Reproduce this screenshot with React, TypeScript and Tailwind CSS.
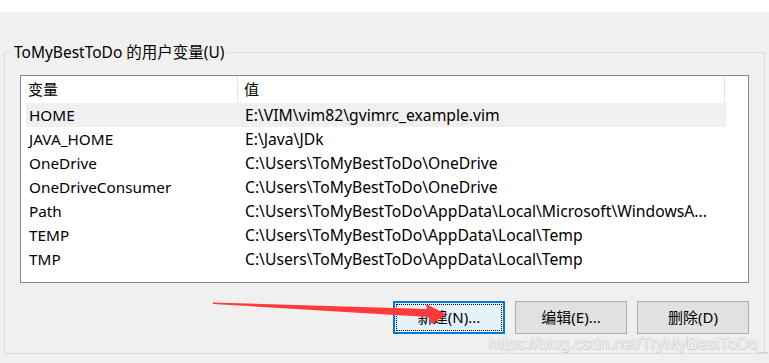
import React from "react";

const rows: [string, string][] = [
  ["HOME", "E:\\VIM\\vim82\\gvimrc_example.vim"],
  ["JAVA_HOME", "E:\\Java\\JDk"],
  ["OneDrive", "C:\\Users\\ToMyBestToDo\\OneDrive"],
  ["OneDriveConsumer", "C:\\Users\\ToMyBestToDo\\OneDrive"],
  ["Path", "C:\\Users\\ToMyBestToDo\\AppData\\Local\\Microsoft\\WindowsA..."],
  ["TEMP", "C:\\Users\\ToMyBestToDo\\AppData\\Local\\Temp"],
  ["TMP", "C:\\Users\\ToMyBestToDo\\AppData\\Local\\Temp"],
];

const font = {
  fontFamily: '"Noto Sans", "Noto Sans CJK SC", sans-serif',
};

export default function App() {
  return (
    <div
      className="relative w-[769px] h-[363px] overflow-hidden bg-[#f0f0f0] text-[15px] text-black"
      style={font}
    >
      <div className="h-[12px] bg-white" />
      <div className="relative ml-[4px] mt-[40px] w-[761px] h-[302px] border border-[#dcdcdc] pl-[15px] pt-[22px]">
        <div className="absolute left-[6px] top-[-12px] bg-[#f0f0f0] px-[3px] leading-[22px] text-[15.5px]">
          ToMyBestToDo 的用户变量(U)
        </div>
        <div className="w-[729px] h-[208px] border border-[#868691] bg-white pl-[5px]">
          <div className="flex h-[27px] items-center w-[700px]">
            <div className="w-[212px] h-full pl-[2px] flex items-center border-r border-[#e5e5e5]">
              变量
            </div>
            <div className="w-[487px] h-full pl-[6px] flex items-center border-r border-[#e5e5e5]">
              值
            </div>
          </div>
          {rows.map(([k, v], i) => (
            <div
              key={k}
              className={`flex h-[24px] items-baseline leading-[24px] w-[700px] ${
                i === 0 ? "bg-[#f0f0f0]" : ""
              }`}
            >
              <div className="w-[212px] pl-[3px] whitespace-nowrap text-[15.3px]">{k}</div>
              <div className="pl-[7px] whitespace-nowrap text-[15.7px]">{v}</div>
            </div>
          ))}
        </div>
        <div className="flex justify-end gap-[10px] mt-[18px] w-[729px]">
          <div className="w-[112px] h-[33px] border-2 border-[#0078d7] bg-[#e5f1fb] p-[1px]">
            <div className="w-full h-full border border-dotted border-black flex items-center justify-center">
              新建(N)...
            </div>
          </div>
          <div className="w-[112px] h-[33px] border border-[#adadad] bg-[#e1e1e1] flex items-center justify-center">
            编辑(E)...
          </div>
          <div className="w-[112px] h-[33px] border border-[#adadad] bg-[#e1e1e1] flex items-center justify-center">
            删除(D)
          </div>
        </div>
      </div>
      <div
        className="absolute left-[489px] top-[334px] text-[16.5px] leading-[18px] text-[#f4f4f4] whitespace-nowrap"
        style={{
          fontFamily: '"Liberation Sans", Arial, sans-serif',
          textShadow:
            "0 0 1px #b8b8b8, 0.5px 0.5px 0 #d0d0d0, -0.5px -0.5px 0 #d0d0d0",
        }}
      >
        https://blog.csdn.net/TryMyBestToDo_
      </div>
      <svg
        className="absolute left-0 top-0"
        width="769"
        height="363"
        viewBox="0 0 769 363"
      >
        <polygon
          points="213,302.5 427,309 426,304 446,314 432,324 428,317 213,304"
          fill="#ff3a3a"
        />
      </svg>
    </div>
  );
}
